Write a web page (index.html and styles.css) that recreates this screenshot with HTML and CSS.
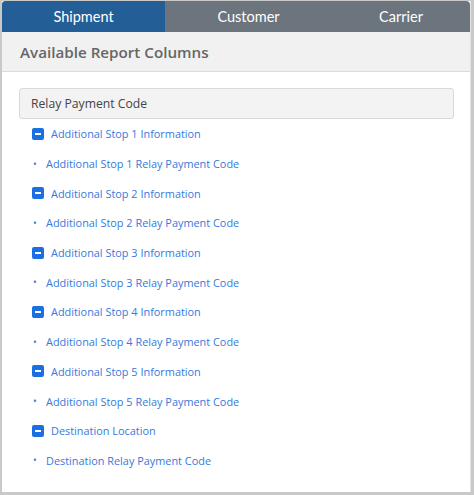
FILE: index.html
```html
<!DOCTYPE html>
<html>
<head>
<meta charset="utf-8">
<link rel="stylesheet" href="styles.css">
</head>
<body>
<div class="card">
  <div class="tabs">
    <div class="tab active">Shipment</div>
    <div class="tab">Customer</div>
    <div class="tab">Carrier</div>
  </div>
  <div class="header">Available Report Columns</div>
  <div class="content">
    <div class="search">Relay Payment Code</div>
    <ul class="tree">
      <li class="group"><span class="minus"></span>Additional Stop 1 Information</li>
      <li class="leaf"><span class="dot">•</span>Additional Stop 1 Relay Payment Code</li>
      <li class="group"><span class="minus"></span>Additional Stop 2 Information</li>
      <li class="leaf"><span class="dot">•</span>Additional Stop 2 Relay Payment Code</li>
      <li class="group"><span class="minus"></span>Additional Stop 3 Information</li>
      <li class="leaf"><span class="dot">•</span>Additional Stop 3 Relay Payment Code</li>
      <li class="group"><span class="minus"></span>Additional Stop 4 Information</li>
      <li class="leaf"><span class="dot">•</span>Additional Stop 4 Relay Payment Code</li>
      <li class="group"><span class="minus"></span>Additional Stop 5 Information</li>
      <li class="leaf"><span class="dot">•</span>Additional Stop 5 Relay Payment Code</li>
      <li class="group"><span class="minus"></span>Destination Location</li>
      <li class="leaf"><span class="dot">•</span>Destination Relay Payment Code</li>
    </ul>
  </div>
</div>
</body>
</html>
```
FILE: styles.css
```css
html, body {
  margin: 0;
  padding: 0;
  background: #c9c9c9;
}
body {
  width: 474px;
  height: 495px;
  padding: 1px 3px 3px 2px;
  box-sizing: border-box;
  font-family: "Open Sans", "Noto Sans", sans-serif;
}
.card {
  background: #fff;
  height: 491px;
  box-sizing: border-box;
  border-right: 1px solid #e4e4e4;
  display: flex;
  flex-direction: column;
}
.tabs {
  display: flex;
  height: 31px;
  background: #6c757d;
  border-radius: 4px 4px 0 0;
  overflow: hidden;
  font-family: Lato, "Open Sans", sans-serif;
}
.tab {
  flex: 1;
  display: flex;
  align-items: center;
  justify-content: center;
  color: #fff;
  font-size: 14.5px;
}
.tab.active {
  background: #245e96;
  flex: 0 0 163px;
}
.tab:nth-child(2) { flex: 0 0 167px; }
.header {
  background: #f1f1f1;
  border-bottom: 1px solid #dcdcdc;
  height: 40px;
  box-sizing: border-box;
  display: flex;
  align-items: center;
  padding-left: 18px;
  font-size: 15.2px;
  font-weight: 600;
  color: #666;
}
.content {
  padding: 16px 16px 0 17px;
}
.search {
  background: #f3f3f3;
  border: 1px solid #dadada;
  border-radius: 3px;
  height: 31px;
  box-sizing: border-box;
  display: flex;
  align-items: center;
  padding-left: 11px;
  font-size: 12.2px;
  color: #444;
}
.tree {
  list-style: none;
  margin: 0;
  padding: 0;
}
.tree li {
  height: 29.7px;
  display: flex;
  align-items: center;
  font-size: 10.9px;
  color: #3679dc;
}
.minus {
  width: 12px;
  height: 12px;
  background: #1b6fe0;
  border-radius: 2px;
  margin-left: 13px;
  margin-right: 7px;
  position: relative;
}
.minus::after {
  content: "";
  position: absolute;
  left: 3px;
  right: 3px;
  top: 5px;
  height: 2px;
  background: #fff;
}
.dot {
  margin-left: 14px;
  width: 13px;
  font-size: 10px;
  color: #3679dc;
}
```
